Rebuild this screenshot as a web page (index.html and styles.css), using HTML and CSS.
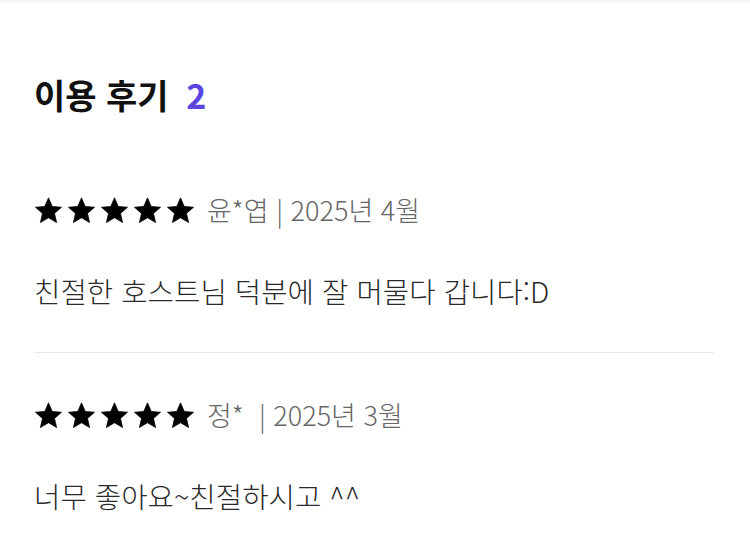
FILE: index.html
```html
<!DOCTYPE html>
<html lang="ko">
<head>
  <meta charset="UTF-8">
  <title>이용 후기</title>
  <link rel="stylesheet" href="styles.css">
</head>
<body>
  <div class="topbar"></div>
  <section class="reviews">
    <h2 class="title">이용 후기 <span class="count">2</span></h2>

    <div class="review">
      <div class="meta">
        <div class="stars">
          <svg viewBox="0 0 24 24"><path d="M12 1.5l3.1 7.1 7.7.7-5.8 5.1 1.7 7.6L12 18l-6.7 4 1.7-7.6-5.8-5.1 7.7-.7z"/></svg>
          <svg viewBox="0 0 24 24"><path d="M12 1.5l3.1 7.1 7.7.7-5.8 5.1 1.7 7.6L12 18l-6.7 4 1.7-7.6-5.8-5.1 7.7-.7z"/></svg>
          <svg viewBox="0 0 24 24"><path d="M12 1.5l3.1 7.1 7.7.7-5.8 5.1 1.7 7.6L12 18l-6.7 4 1.7-7.6-5.8-5.1 7.7-.7z"/></svg>
          <svg viewBox="0 0 24 24"><path d="M12 1.5l3.1 7.1 7.7.7-5.8 5.1 1.7 7.6L12 18l-6.7 4 1.7-7.6-5.8-5.1 7.7-.7z"/></svg>
          <svg viewBox="0 0 24 24"><path d="M12 1.5l3.1 7.1 7.7.7-5.8 5.1 1.7 7.6L12 18l-6.7 4 1.7-7.6-5.8-5.1 7.7-.7z"/></svg>
        </div>
        <span class="author">윤*엽 | 2025년 4월</span>
      </div>
      <p class="text">친절한 호스트님 덕분에 잘 머물다 갑니다:D</p>
    </div>

    <div class="review">
      <div class="meta">
        <div class="stars">
          <svg viewBox="0 0 24 24"><path d="M12 1.5l3.1 7.1 7.7.7-5.8 5.1 1.7 7.6L12 18l-6.7 4 1.7-7.6-5.8-5.1 7.7-.7z"/></svg>
          <svg viewBox="0 0 24 24"><path d="M12 1.5l3.1 7.1 7.7.7-5.8 5.1 1.7 7.6L12 18l-6.7 4 1.7-7.6-5.8-5.1 7.7-.7z"/></svg>
          <svg viewBox="0 0 24 24"><path d="M12 1.5l3.1 7.1 7.7.7-5.8 5.1 1.7 7.6L12 18l-6.7 4 1.7-7.6-5.8-5.1 7.7-.7z"/></svg>
          <svg viewBox="0 0 24 24"><path d="M12 1.5l3.1 7.1 7.7.7-5.8 5.1 1.7 7.6L12 18l-6.7 4 1.7-7.6-5.8-5.1 7.7-.7z"/></svg>
          <svg viewBox="0 0 24 24"><path d="M12 1.5l3.1 7.1 7.7.7-5.8 5.1 1.7 7.6L12 18l-6.7 4 1.7-7.6-5.8-5.1 7.7-.7z"/></svg>
        </div>
        <span class="author">정*&nbsp; | 2025년 3월</span>
      </div>
      <p class="text">너무 좋아요~친절하시고 ^^</p>
    </div>
  </section>
</body>
</html>
```

FILE: styles.css
```css
body {
  margin: 0;
  background-color: #fff;
  font-family: "Noto Sans CJK KR", "Noto Sans", sans-serif;
  color: #222;
}
.topbar {
  height: 3px;
  background-color: #f5f5f5;
}
.reviews {
  padding: 0 36px 0 34px;
}
.title {
  margin: 67px 0 28px;
  font-size: 34px;
  font-weight: bold;
  line-height: 50px;
  color: #111;
}
.count {
  margin-left: 8px;
  color: #5b45e0;
}
.review {
  padding: 44px 0 41px;
  border-bottom: 1px solid #e8e8e8;
}
.review:last-child {
  border-bottom: none;
}
.meta {
  display: flex;
  align-items: center;
  gap: 12px;
  height: 36px;
}
.stars {
  display: flex;
  gap: 4px;
}
.stars svg {
  width: 29px;
  height: 29px;
  fill: #000;
  stroke: #000;
  stroke-width: 0.6;
  stroke-linejoin: round;
}
.author {
  font-size: 27px;
  line-height: 36px;
  font-weight: 300;
  color: #666;
}
.text {
  margin: 43px 0 0;
  font-size: 28.7px;
  line-height: 40px;
  font-weight: 300;
  color: #2a2a2a;
}
```
